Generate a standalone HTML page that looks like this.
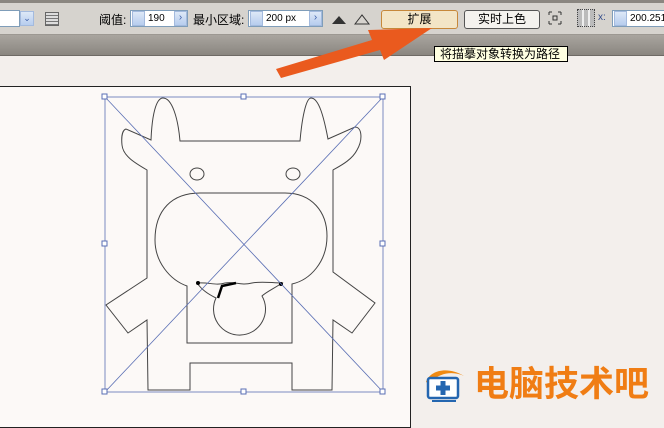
<!DOCTYPE html>
<html><head><meta charset="utf-8"><style>
body{margin:0;width:664px;height:414px;overflow:hidden;background:#f3efec;font-family:"Liberation Sans","Noto Sans CJK SC",sans-serif;position:relative}
.tb{position:absolute;left:0;top:0;width:664px;height:35px;background:#d6d3ce;border-top:3px solid #8a8680;box-sizing:border-box;border-bottom:1px solid #9c9892}
.band{position:absolute;left:0;top:35px;width:664px;height:20px;background:linear-gradient(#a9a59f,#8a8680);border-bottom:1px solid #6e6a65}
.ab{position:absolute;left:-2px;top:86px;width:411px;height:340px;background:#fcf9f7;border:1px solid #222}
.t{position:absolute;font-size:12px;color:#000;white-space:nowrap}
.inp{position:absolute;background:#fff;border:1px solid #7f9db9;height:17px;box-sizing:border-box;font-size:10px;line-height:15px}
.sp{position:absolute;width:13px;height:15px;background:linear-gradient(#dde8f7,#b6cdee);border:1px solid #a3bade;box-sizing:border-box}
.btn{position:absolute;height:19px;border:1px solid #555;border-radius:3px;box-sizing:border-box;font-size:12px;text-align:center;line-height:17px}
</style></head><body>
<div class="tb"></div>
<div class="band"></div>
<div class="inp" style="left:0;top:10px;width:20px;border-left:none"></div>
<div class="sp" style="left:20px;top:11px;width:14px;color:#3c5ea8;font-size:9px;text-align:center;line-height:12px">⌄</div>
<div style="position:absolute;left:45px;top:12px;width:12px;height:12px;border:1px solid #666;background:repeating-linear-gradient(#ddd 0 2px,#777 2px 3px)"></div>
<div class="t" style="left:99px;top:11px">阈值:</div>
<div class="inp" style="left:130px;top:10px;width:58px;padding-left:17px">190</div>
<div class="sp" style="left:132px;top:11px"></div>
<div class="sp" style="left:174px;top:11px;color:#3c5ea8;font-size:10px;line-height:12px;text-align:center">›</div>
<div class="t" style="left:193px;top:11px">最小区域:</div>
<div class="inp" style="left:248px;top:10px;width:75px;padding-left:17px">200 px</div>
<div class="sp" style="left:250px;top:11px"></div>
<div class="sp" style="left:309px;top:11px;color:#3c5ea8;font-size:10px;line-height:12px;text-align:center">›</div>
<svg style="position:absolute;left:328px;top:10px" width="50" height="18"><path d="M4 14 L11 6 L18 14 Z" fill="#333"/><path d="M27 14 L34 5 L41 14 Z" fill="none" stroke="#333"/></svg>
<div class="btn" style="left:381px;top:10px;width:77px;background:#f3e5c6;border-color:#c7883a">扩展</div>
<div class="btn" style="left:464px;top:10px;width:76px;background:#f4f2ee">实时上色</div>
<svg style="position:absolute;left:548px;top:11px" width="14" height="14"><path d="M1 1h3M1 1v3M13 1h-3M13 1v3M1 13h3M1 13v-3M13 13h-3M13 13v-3M5 5h4v4H5z" stroke="#333" fill="none"/></svg>
<div style="position:absolute;left:577px;top:9px;width:16px;height:16px;border:1px dotted #444;background:repeating-linear-gradient(90deg,#bbb 0 4px,#eee 4px 6px)"></div>
<div class="t" style="left:598px;top:12px;font-size:10px;color:#324b8a">x:</div>
<div class="inp" style="left:612px;top:10px;width:60px;padding-left:17px">200.251</div>
<div class="sp" style="left:614px;top:11px"></div>
<div style="position:absolute;left:434px;top:46px;width:134px;height:16px;background:#ffffe1;border:1px solid #000;box-sizing:border-box;font-size:12px;line-height:14px;padding-left:5px">将描摹对象转换为路径</div>
<div class="ab"></div>
<svg style="position:absolute;left:0;top:0" width="664" height="414">
<g fill="none" stroke="#444" stroke-width="1">
<path d="M151 140 C152 115 156 98 163 98 C172 98 178 118 180 141 L300 141 C302 118 306 98 311 98 C319 98 324 118 328 139 L355 127 C362 127 363 140 357 150 C352 160 340 166 333 170 L333 272 L375 303 L352 333 L333 320 L332 390 L292 390 L292 363 L190 363 L190 390 L148 390 L147 320 L128 333 L106 305 L147 278 L147 170 C135 163 123 156 122 145 C121 135 123 130 126 129 Z"/>
<ellipse cx="197" cy="174" rx="7" ry="6"/><ellipse cx="293" cy="174" rx="7" ry="6"/>
<path d="M187 343 L187 286 C170 280 155 262 155 240 C155 210 172 193 200 193 L285 193 C312 193 327 212 327 236 C327 262 310 280 292 284 L292 343 Z"/>
<path d="M197 283 C210 282 215 286 225 283 C235 281 240 286 252 283 C262 281 272 283 282 283 C275 288 266 292 262 296 A26 26 0 1 1 216 298 C208 294 202 290 197 283 Z"/>
</g>
<path d="M218 298 L222 286 L236 283" stroke="#000" stroke-width="2.5" fill="none"/>
<circle cx="198" cy="283" r="2" fill="#000"/><circle cx="281" cy="284" r="2" fill="#000"/>
<g stroke="#5a6fb4" stroke-width="0.8" fill="none">
<rect x="105" y="97" width="278" height="295"/>
<line x1="105" y1="97" x2="383" y2="392"/><line x1="383" y1="97" x2="105" y2="392"/>
</g>
<g fill="#fff" stroke="#5a6fb4">
<rect x="102" y="94" width="5" height="5"/><rect x="241" y="94" width="5" height="5"/><rect x="380" y="94" width="5" height="5"/>
<rect x="102" y="241" width="5" height="5"/><rect x="380" y="241" width="5" height="5"/>
<rect x="102" y="389" width="5" height="5"/><rect x="241" y="389" width="5" height="5"/><rect x="380" y="389" width="5" height="5"/>
</g>
<path d="M276 69 L372 40 L368 30 L432 28 L384 60 L380 50 L281 78 Z" fill="#ea5a1e"/>
<g transform="translate(424,366)">
<path d="M2 16 C6 4 24 0 40 10 C30 5 14 6 6 18 Z" fill="#f08a12"/>
<rect x="4" y="12" width="30" height="20" rx="2" fill="#fff" stroke="#2466b0" stroke-width="2.5"/>
<path d="M12 22h14M19 15v14" stroke="#2466b0" stroke-width="5"/>
<path d="M8 35h24" stroke="#2466b0" stroke-width="2"/>
</g>
<text x="474" y="396" font-family="Liberation Sans,Noto Sans CJK SC,sans-serif" font-size="35" font-weight="bold" fill="#f07d14">电脑技术吧</text>
</svg>
</body></html>
